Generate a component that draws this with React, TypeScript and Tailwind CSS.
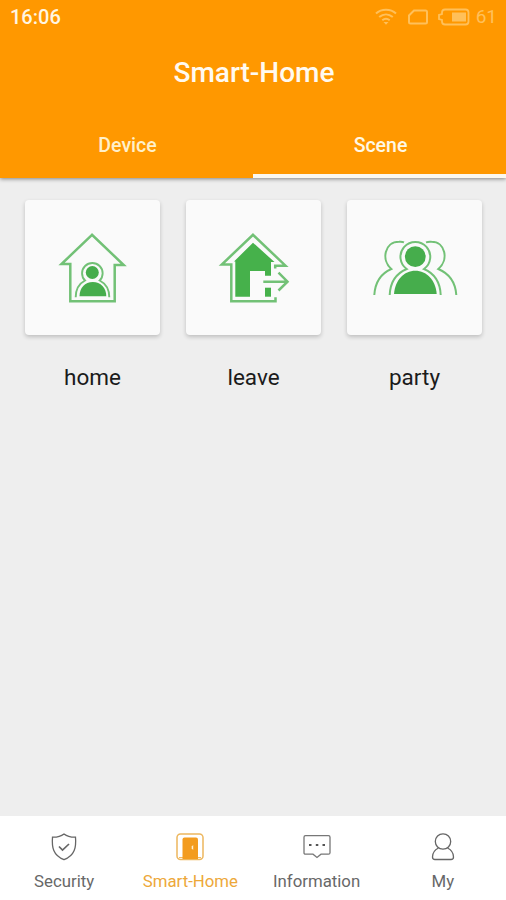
import type { ReactNode } from "react";

function StatusBar() {
  return (
    <div className="flex h-8 items-center justify-between pl-[10px] pr-[9px] pt-px">
      <span className="text-[20px] font-medium leading-8 text-[#fff6e2]">16:06</span>
      <div className="flex items-center text-[#ffc05a]">
        <svg width="22" height="18" viewBox="0 0 22 18" fill="none" stroke="currentColor" strokeWidth="2">
          <path d="M1 5.5C6.5 .5 15.500 .5 21 5.500M4.200 9C8.300 5.500 13.700 5.500 17.800 9M7.300 12.300C9.500 10.500 12.500 10.500 14.700 12.300" />
          <path d="M8.500 14L11 16.700L13.500 14Z" fill="currentColor" stroke="none" />
        </svg>
        <svg className="ml-[11px]" width="20" height="16" viewBox="0 0 20 16" fill="none" stroke="currentColor" strokeWidth="2">
          <path d="M6 1.500H17.500Q19 1.500 19 3V13Q19 14.500 17.500 14.500H2.500Q1 14.500 1 13V6.500Z" />
        </svg>
        <svg className="ml-[10px]" width="32" height="18" viewBox="0 0 32 18" fill="none" stroke="currentColor" strokeWidth="1.800">
          <path d="M7 1.500H27.500Q30.500 1.500 30.500 4.500V13.500Q30.500 16.500 27.500 16.500H7Q4 16.500 4 13.500V12L1 11V7L4 6V4.500Q4 1.500 7 1.500Z" />
          <rect x="14" y="4.500" width="14" height="9" fill="currentColor" stroke="none" />
        </svg>
        <span className="ml-[6px] text-[19px] leading-8">61</span>
      </div>
    </div>
  );
}

function HomeIcon() {
  return (
    <svg width="135" height="135" viewBox="0 0 135 135" fill="none" stroke="#72c176" strokeWidth="2.500">
      <path d="M67 34.800L36.500 64H45.300V101.200H89.700V65H98.700Z" />
      <path d="M50.700 97.300C50.700 89 54.300 83.500 60 80.500A10.300 10.300 0 1 1 74.700 80.500C80.500 83.500 84.300 89 84.300 97.300" strokeWidth="1.900" />
      <g fill="#46ad4c" stroke="none">
        <circle cx="67.300" cy="72.500" r="6.500" />
        <path d="M54.500 96.200C54.500 88 60 82 67.800 82S81.300 88 81.300 96.200Z" />
      </g>
    </svg>
  );
}

function LeaveIcon() {
  return (
    <svg width="135" height="135" viewBox="0 0 135 135" fill="none" stroke="#72c176" strokeWidth="2.500">
      <path d="M89.500 97.300V101.300H45.300V64.500H35.800L67 34.800L99.500 65.700H89.200V68.500" />
      <path d="M67 42.700L48 61.500H49.300V96.700H64V71H79V75.700H85V62H88.500Z" fill="#46b14b" stroke="none" />
      <path d="M79 87.700H85V96.700H79Z" fill="#46b14b" stroke="none" />
      <path d="M77.300 81.700H101M92.500 72.700L101.500 81.700L92.500 90.500" />
    </svg>
  );
}

function PartyIcon() {
  return (
    <svg width="135" height="135" viewBox="0 0 135 135" fill="none" stroke="#72c176" strokeWidth="2">
      <path d="M27.300 95C28.100 83 34 73.500 44.300 69C34 60 37.500 41.800 52 41.800Q55 41.500 57 42.400" />
      <path d="M109.300 95C108.500 83 102 73.500 91.300 69C102 60 98.500 41.800 84.500 41.800Q81.500 41.500 79 42.400" />
      <path d="M42.700 95C43.200 83 49 73.500 59.700 69A14.900 14.900 0 1 1 77 69C87.500 73.500 93.200 83 93.700 95" />
      <g fill="#46ad4c" stroke="none">
        <circle cx="68.300" cy="56.700" r="10.400" />
        <path d="M47 94C48 80 57 70.700 68.300 70.700S88.700 80 89.700 94Z" />
      </g>
    </svg>
  );
}

function ShieldIcon() {
  return (
    <svg width="28" height="30" viewBox="0 0 28 30" fill="none" stroke="#666" strokeWidth="1.300">
      <path d="M14 2C11 4.300 6.500 5.300 2.500 5.200C1.700 15 3 23.500 14 27.700C25 23.500 26.300 15 25.500 5.200C21.500 5.300 17 4.300 14 2Z" />
      <path d="M9 14.500L12.500 18L19 12" strokeWidth="1.700" />
    </svg>
  );
}

function DoorIcon() {
  return (
    <svg width="28" height="30" viewBox="0 0 28 30" fill="none">
      <rect x="1" y="2" width="26" height="25.500" rx="3.500" stroke="#edb75e" strokeWidth="1.500" />
      <path d="M3 25.500H25" stroke="#f3ba61" />
      <path d="M6.500 27V7.500Q6.500 5.500 8.500 5.500H20Q22 5.500 22 7.500V27Z" fill="#f39c1f" />
      <path d="M15.700 14.500L17.200 13V18L15.700 16.500Z" fill="#fff0cf" />
    </svg>
  );
}

function MessageIcon() {
  return (
    <svg width="28" height="30" viewBox="0 0 28 30" fill="none" stroke="#777" strokeWidth="1.300">
      <path d="M2.500 3.700H25.500Q27 3.700 27 5.200V20.700Q27 22.200 25.500 22.200H18L14 25.500L10 22.200H2.500Q1 22.200 1 20.700V5.200Q1 3.700 2.500 3.700Z" />
      <path d="M6 13H8.500M12.800 13H15.300M19.500 13H22" stroke="#555" strokeWidth="2" />
    </svg>
  );
}

function PersonIcon() {
  return (
    <svg width="28" height="30" viewBox="0 0 28 30" fill="none" stroke="#666" strokeWidth="1.300">
      <circle cx="14" cy="9.500" r="7.700" />
      <path d="M9.500 16C5.500 18 3.500 21.500 3.500 25Q3.500 27.500 6 27.500H22Q24.500 27.500 24.500 25C24.500 21.500 22.500 18 18.500 16" />
    </svg>
  );
}

function SceneCard({ label, children }: { label: string; children: ReactNode }) {
  return (
    <div className="flex flex-col items-center">
      <div className="size-[135px] rounded-[4px] bg-[#fafafa] shadow-[0_2px_4px_rgba(0,0,0,0.2)]">
        {children}
      </div>
      <span className="mt-[26px] text-[22.500px] leading-8 text-[#1b1b1b]">{label}</span>
    </div>
  );
}

function NavItem({ label, active, children }: { label: string; active?: boolean; children: ReactNode }) {
  return (
    <button className="flex flex-1 flex-col items-center pt-4">
      {children}
      <span className={`mt-[7px] text-[16.800px] leading-6 ${active ? "text-[#eda83a]" : "text-[#686868]"}`}>
        {label}
      </span>
    </button>
  );
}

export default function App() {
  return (
    <div className="flex h-[900px] w-[506px] flex-col overflow-hidden bg-[#eeeeee] font-[Roboto,sans-serif]">
      <header className="bg-[#ff9800] shadow-[0_1px_4px_rgba(0,0,0,0.45)]">
        <StatusBar />
        <h1 className="h-20 pl-[2px] pt-px text-center text-[28px] font-medium leading-[80px] text-[#fffaf0]">
          Smart-Home
        </h1>
        <div className="grid h-[66px] grid-cols-2 text-center text-[19.500px] font-medium leading-[68px]">
          <div className="h-[66px] pl-[2px] text-[#fff0ca]">Device</div>
          <div className="h-[66px] border-b-4 border-[#fbf8f0] pl-[2px] text-[#fff8e5]">Scene</div>
        </div>
      </header>

      <main className="flex flex-1 items-start gap-[26px] pl-[25px] pt-[22px]">
        <SceneCard label="home">
          <HomeIcon />
        </SceneCard>
        <SceneCard label="leave">
          <LeaveIcon />
        </SceneCard>
        <SceneCard label="party">
          <PartyIcon />
        </SceneCard>
      </main>

      <nav className="flex h-[84px] bg-white pl-px">
        <NavItem label="Security">
          <ShieldIcon />
        </NavItem>
        <NavItem label="Smart-Home" active>
          <DoorIcon />
        </NavItem>
        <NavItem label="Information">
          <MessageIcon />
        </NavItem>
        <NavItem label="My">
          <PersonIcon />
        </NavItem>
      </nav>
    </div>
  );
}
